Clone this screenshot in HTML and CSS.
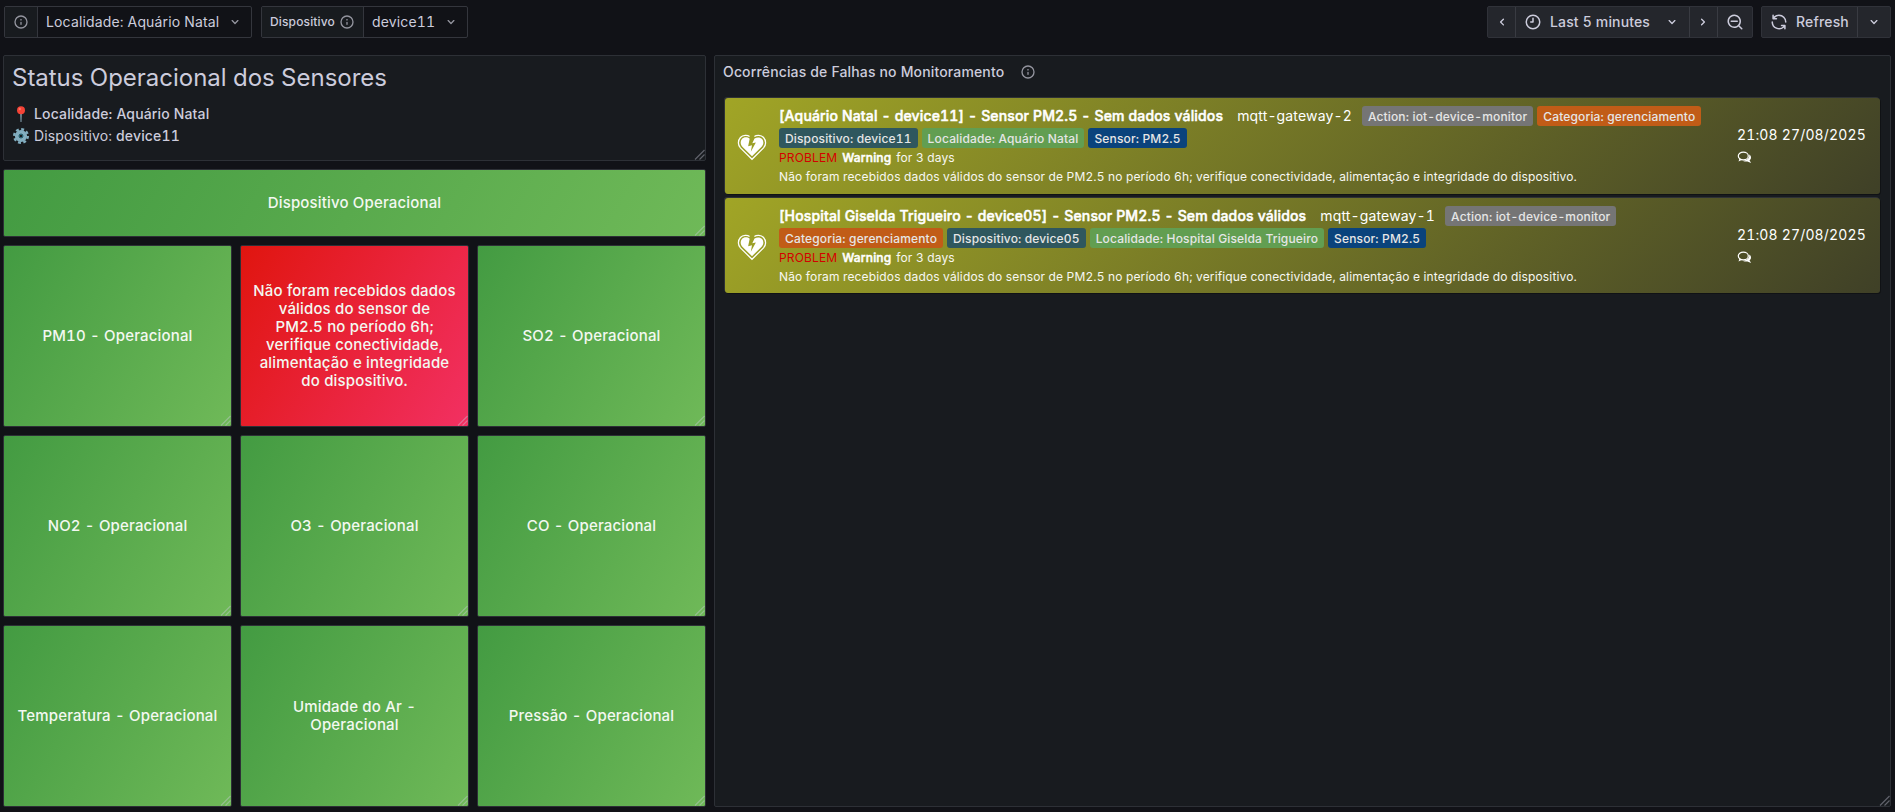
FILE: index.html
```html
<!DOCTYPE html>
<html lang="pt-BR">
<head>
<meta charset="utf-8">
<title>Status Operacional dos Sensores</title>
<link rel="stylesheet" href="styles.css">
</head>
<body>
<svg class="sprite" width="0" height="0">
  <symbol id="info" viewBox="0 0 24 24"><path fill="currentColor" d="M12,2A10,10,0,1,0,22,12,10.01114,10.01114,0,0,0,12,2Zm0,18a8,8,0,1,1,8-8A8.00917,8.00917,0,0,1,12,20Zm0-8.5a1,1,0,0,0-1,1v3a1,1,0,0,0,2,0v-3A1,1,0,0,0,12,11.5Zm0-4a1.25,1.25,0,1,0,1.25,1.25A1.25,1.25,0,0,0,12,7.5Z"/></symbol>
  <symbol id="down" viewBox="0 0 24 24"><path fill="currentColor" d="M17,9.17a1,1,0,0,0-1.41,0L12,12.71,8.46,9.17a1,1,0,0,0-1.41,0,1,1,0,0,0,0,1.42l4.24,4.24a1,1,0,0,0,1.42,0L17,10.59A1,1,0,0,0,17,9.17Z"/></symbol>
  <symbol id="left" viewBox="0 0 24 24"><path fill="currentColor" d="M11.29,12l3.54-3.54a1,1,0,0,0,0-1.41,1,1,0,0,0-1.42,0L9.17,11.29a1,1,0,0,0,0,1.42L13.41,17a1,1,0,0,0,.71.29,1,1,0,0,0,.71-.29,1,1,0,0,0,0-1.41Z"/></symbol>
  <symbol id="right" viewBox="0 0 24 24"><path fill="currentColor" d="M14.83,11.29,10.59,7.05a1,1,0,0,0-1.42,0,1,1,0,0,0,0,1.41L12.71,12,9.17,15.54a1,1,0,0,0,0,1.41,1,1,0,0,0,.71.29,1,1,0,0,0,.71-.29l4.24-4.24A1,1,0,0,0,14.83,11.29Z"/></symbol>
  <symbol id="clock" viewBox="0 0 24 24"><path fill="currentColor" d="M12,2A10,10,0,1,0,22,12,10,10,0,0,0,12,2Zm0,18a8,8,0,1,1,8-8A8,8,0,0,1,12,20ZM12,6a1,1,0,0,0-1,1v4H9a1,1,0,0,0,0,2h3a1,1,0,0,0,1-1V7A1,1,0,0,0,12,6Z"/></symbol>
  <symbol id="zoomout" viewBox="0 0 24 24"><path fill="currentColor" d="M21.71,20.29,18,16.61A9,9,0,1,0,16.61,18l3.68,3.68a1,1,0,0,0,1.42,0A1,1,0,0,0,21.71,20.29ZM11,18a7,7,0,1,1,7-7A7,7,0,0,1,11,18Zm4-8H7a1,1,0,0,0,0,2h8a1,1,0,0,0,0-2Z"/></symbol>
  <symbol id="sync" viewBox="0 0 24 24"><path fill="currentColor" d="M19.91,15.51H15.38a1,1,0,0,0,0,2h2.4A8,8,0,0,1,4,12a1,1,0,0,0-2,0,10,10,0,0,0,16.88,7.23V21a1,1,0,0,0,2,0V16.5A1,1,0,0,0,19.91,15.51ZM12,2A10,10,0,0,0,5.12,4.77V3a1,1,0,0,0-2,0V7.5a1,1,0,0,0,1,1h4.5a1,1,0,0,0,0-2H6.22A8,8,0,0,1,20,12a1,1,0,0,0,2,0A10,10,0,0,0,12,2Z"/></symbol>
  <symbol id="grip" viewBox="0 0 11 11"><path d="M1 10.500L10.500 1M5.500 10.500L10.500 5.500" stroke="currentColor" stroke-width="1.200" fill="none"/></symbol>
  <symbol id="heart" viewBox="0 0 30 28"><path d="M12.500 2.500C10.500 1 5.500 .7 3 3.600C0 7 .4 11.500 3 14.400L15 26.200L27 14.400C29.600 11.500 30 7 27 3.600C24.500 .7 19.500 1 17.500 2.500" fill="none" stroke="#fff" stroke-width="1.300"/><path fill="#fff" d="M12.600 4.900L11 12.600L15 11.700L13.800 18.500L19 8.800L15.300 9.500L17.600 4.600C20.300 2.900 23.800 3.200 25.500 5.300C27.500 7.800 27 11 25 13.100L15 23L5 13.100C3 11 2.500 7.800 4.500 5.300C6.400 3 10.300 2.900 12.600 4.900Z"/></symbol>
  <symbol id="chat" viewBox="0 0 14 13"><ellipse cx="5.800" cy="5" rx="5" ry="3.900" fill="none" stroke="#fff" stroke-width="1.200"/><path d="M2 7.500L1 10.500L4.800 8.800Z" fill="#fff"/><path d="M11.700 3.500C14 5 14.200 7.800 12 9.300L13.600 11.900L9.900 10.400C8 10.800 6 10.500 5 9.800C9 9.700 12.300 7.500 11.700 3.500Z" fill="#fff"/></symbol>
</svg>

<header class="toolbar">
  <div class="control loc"><span class="control-label"><svg class="i16"><use href="#info"/></svg></span><span class="control-value">Localidade: Aquário Natal<svg class="i16"><use href="#down"/></svg></span></div>
  <div class="control dev"><span class="control-label">Dispositivo<svg class="i16"><use href="#info"/></svg></span><span class="control-value">device11<svg class="i16"><use href="#down"/></svg></span></div>
  <div class="buttons">
    <span class="btn prev"><svg class="i16"><use href="#left"/></svg></span>
    <span class="btn range"><svg class="i18"><use href="#clock"/></svg><b>Last 5 minutes</b><svg class="i16"><use href="#down"/></svg></span>
    <span class="btn next"><svg class="i16"><use href="#right"/></svg></span>
    <span class="btn zoom"><svg class="i18"><use href="#zoomout"/></svg></span>
  </div>
  <div class="buttons">
    <span class="btn refresh"><svg class="i18"><use href="#sync"/></svg><b>Refresh</b></span>
    <span class="btn interval"><svg class="i16"><use href="#down"/></svg></span>
  </div>
</header>

<main class="dashboard">
  <section class="left">
    <div class="panel intro">
      <h1>Status Operacional dos Sensores</h1>
      <p><svg class="emoji" viewBox="0 0 16 16"><path d="M7.200 8h1.600l-.3 8h-1z" fill="#7f9ba8"/><circle cx="8" cy="4.300" r="4" fill="#f44336"/><circle cx="6.800" cy="3" r="1.200" fill="#ff7265"/></svg><strong>Localidade: Aquário Natal</strong></p>
      <p><svg class="emoji" viewBox="0 0 16 16"><circle cx="8" cy="8" r="6.800" fill="none" stroke="#82aec0" stroke-width="2.400" stroke-dasharray="2.900 2.440"/><circle cx="8" cy="8" r="4.200" fill="none" stroke="#82aec0" stroke-width="3.800"/><circle cx="8" cy="8" r="1.900" fill="none" stroke="#2f7889" stroke-width="1"/></svg>Dispositivo: <strong>device11</strong></p>
      <svg class="grip"><use href="#grip"/></svg>
    </div>
    <div class="panel stat banner"><span>Dispositivo Operacional</span><svg class="grip"><use href="#grip"/></svg></div>
    <div class="tiles">
      <div class="panel stat"><span>PM10 - Operacional</span><svg class="grip"><use href="#grip"/></svg></div>
      <div class="panel stat fail"><span>Não foram recebidos dados válidos do sensor de<br>PM2.5 no período 6h; verifique conectividade, alimentação e integridade do dispositivo.</span><svg class="grip"><use href="#grip"/></svg></div>
      <div class="panel stat"><span>SO2 - Operacional</span><svg class="grip"><use href="#grip"/></svg></div>
      <div class="panel stat"><span>NO2 - Operacional</span><svg class="grip"><use href="#grip"/></svg></div>
      <div class="panel stat"><span>O3 - Operacional</span><svg class="grip"><use href="#grip"/></svg></div>
      <div class="panel stat"><span>CO - Operacional</span><svg class="grip"><use href="#grip"/></svg></div>
      <div class="panel stat"><span>Temperatura - Operacional</span><svg class="grip"><use href="#grip"/></svg></div>
      <div class="panel stat"><span>Umidade do Ar - Operacional</span><svg class="grip"><use href="#grip"/></svg></div>
      <div class="panel stat"><span>Pressão - Operacional</span><svg class="grip"><use href="#grip"/></svg></div>
    </div>
  </section>

  <section class="panel problems">
    <h2>Ocorrências de Falhas no Monitoramento<svg class="i16"><use href="#info"/></svg></h2>
    <article class="card">
      <svg class="heart"><use href="#heart"/></svg>
      <div class="body">
        <div class="line"><strong class="name">[Aquário Natal - device11] - Sensor PM2.5 - Sem dados válidos</strong><span class="host">mqtt-gateway-2</span><span class="tag gray">Action: iot-device-monitor</span><span class="tag orange">Categoria: gerenciamento</span></div>
        <div class="line tags"><span class="tag teal">Dispositivo: device11</span><span class="tag green">Localidade: Aquário Natal</span><span class="tag blue">Sensor: PM2.5</span></div>
        <div class="status"><em>PROBLEM</em><strong>Warning</strong>for 3 days</div>
        <div class="desc">Não foram recebidos dados válidos do sensor de PM2.5 no período 6h; verifique conectividade, alimentação e integridade do dispositivo.</div>
      </div>
      <div class="time">21:08 27/08/2025<svg class="chat"><use href="#chat"/></svg></div>
    </article>
    <article class="card last">
      <svg class="heart"><use href="#heart"/></svg>
      <div class="body">
        <div class="line"><strong class="name">[Hospital Giselda Trigueiro - device05] - Sensor PM2.5 - Sem dados válidos</strong><span class="host">mqtt-gateway-1</span><span class="tag gray">Action: iot-device-monitor</span></div>
        <div class="line tags"><span class="tag orange">Categoria: gerenciamento</span><span class="tag teal">Dispositivo: device05</span><span class="tag green">Localidade: Hospital Giselda Trigueiro</span><span class="tag blue">Sensor: PM2.5</span></div>
        <div class="status"><em>PROBLEM</em><strong>Warning</strong>for 3 days</div>
        <div class="desc">Não foram recebidos dados válidos do sensor de PM2.5 no período 6h; verifique conectividade, alimentação e integridade do dispositivo.</div>
      </div>
      <div class="time">21:08 27/08/2025<svg class="chat"><use href="#chat"/></svg></div>
    </article>
    <svg class="grip"><use href="#grip"/></svg>
  </section>
</main>
</body>
</html>
```
FILE: styles.css
```css
* { box-sizing: border-box; }
body {
  margin: 0;
  height: 812px;
  overflow: hidden;
  background: #111217;
  color: #ccccdc;
  font: 400 14px/22px Inter, "Liberation Sans", sans-serif;
  font-variant-numeric: tabular-nums;
  letter-spacing: 0.15px;
  white-space: nowrap;
}
.sprite { position: absolute; }
svg { flex: none; display: block; }
.i16 { width: 16px; height: 16px; }
.i18 { width: 18px; height: 18px; }

.toolbar { display: flex; gap: 8px; padding: 6px 4px 0; height: 55px; }
.control { display: flex; height: 32px; border: 1px solid #34363d; border-radius: 2px; }
.control.loc { width: 248px; margin-right: 1px; }
.control.dev { width: 207px; margin-right: auto; }
.control-label {
  display: flex; align-items: center; gap: 4px;
  padding-left: 8px;
  background: #181b1f;
  border-right: 1px solid #34363d;
  font-size: 12px; font-weight: 500;
}
.control-label svg { color: #94959f; }
.loc .control-label { width: 33px; }
.dev .control-label { width: 102px; }
.control-value { display: flex; flex: 1; align-items: center; justify-content: space-between; padding: 0 8px; }
.control-value svg, .problems h2 svg { color: #94959f; }
.buttons { display: flex; height: 32px; background: #24262c; border: 1px solid #303239; border-radius: 2px; }
.btn { display: flex; align-items: center; justify-content: center; border-left: 1px solid #393b42; }
.btn:first-child { border-left: 0; }
.btn b { font-weight: 500; }
.prev { width: 27px; }
.range { width: 174px; justify-content: flex-start; padding-left: 8px; gap: 8px; }
.range svg:last-child { margin-left: auto; margin-right: 9px; }
.next { width: 28px; }
.next svg { margin-right: 1px; }
.zoom { width: 35px; }
.refresh { width: 95px; gap: 8px; }
.interval { width: 33px; }

.dashboard { display: flex; gap: 8px; padding: 0 4px 0 3px; height: 752px; }
.panel { position: relative; background: #181b1f; border: 1px solid #2d3036; border-radius: 2px; }
.left { display: flex; flex-direction: column; gap: 8px; width: 703px; }
.grip { position: absolute; right: 0; bottom: 0; width: 11px; height: 11px; color: #ccccdc; opacity: .4; }
.intro { height: 106px; padding: 8px; }
.intro h1 { margin: 0 0 11px; font-size: 24px; line-height: 28px; font-weight: 400; letter-spacing: -0.02px; }
.intro p { display: flex; align-items: center; margin: 0; white-space: pre; }
.intro strong { font-weight: 500; }
.emoji { width: 16px; height: 16px; margin: 0 5px 0 1px; }
.stat {
  display: flex; align-items: center; justify-content: center;
  padding: 0 8px;
  background: linear-gradient(120deg, #439b42, #6fb958);
  color: #f3f8f1;
  font-size: 15px; line-height: 18px; font-weight: 500; letter-spacing: 0.16px;
  text-align: center; white-space: normal;
}
.fail { background: linear-gradient(120deg, #e0150f, #f23062); }
.banner { height: 68px; }
.tiles { display: grid; flex: 1; grid-template-columns: repeat(3, 1fr); grid-template-rows: repeat(3, 182px); gap: 8px; }

.problems { flex: 1; padding: 0 10px; }
.problems h2 { display: flex; align-items: center; gap: 16px; margin: 0 0 10px -2px; height: 32px; font-size: 14px; font-weight: 500; }
.card {
  display: flex;
  height: 96px;
  margin-bottom: 4px;
  padding-left: 12px;
  border-radius: 3px;
  background: linear-gradient(135deg, #a1a526, #3f4027);
  box-shadow: -1px -1px 0 0 rgba(255,255,255,.1), 1px 1px 0 0 rgba(0,0,0,.3);
  color: #fff;
}
.card.last { height: 95px; }
.heart { width: 30px; height: 27px; margin-top: 36px; }
.body { flex: 1; padding: 8px 0 0 12px; }
.line { display: flex; align-items: center; gap: 4px; height: 20px; margin-bottom: 2px; }
.name { font-weight: 500; -webkit-text-stroke: 0.5px #fff; }
.host { margin: 0 6px 0 10px; }
.tag { height: 20px; padding: 0 6px; border-radius: 3px; font-size: 12px; line-height: 21px; font-weight: 500; color: #e6e6e6; letter-spacing: 0.15px; }
.gray { background: #757575; }
.orange { background: #c15c17; }
.teal { background: #2f575e; }
.green { background: #629e51; }
.blue { background: #0a437c; }
.status, .desc { font-size: 12px; line-height: 19px; color: #f7f7f2; letter-spacing: 0.15px; }
.status { display: flex; gap: 5px; margin-top: -2px; }
.status em { font-style: normal; color: #d40000; }
.status strong { font-weight: 500; color: #fff; -webkit-text-stroke: 0.5px #fff; }
.time { width: 143px; padding-top: 26px; }
.chat { width: 15px; height: 13px; margin-top: 5px; }
```
